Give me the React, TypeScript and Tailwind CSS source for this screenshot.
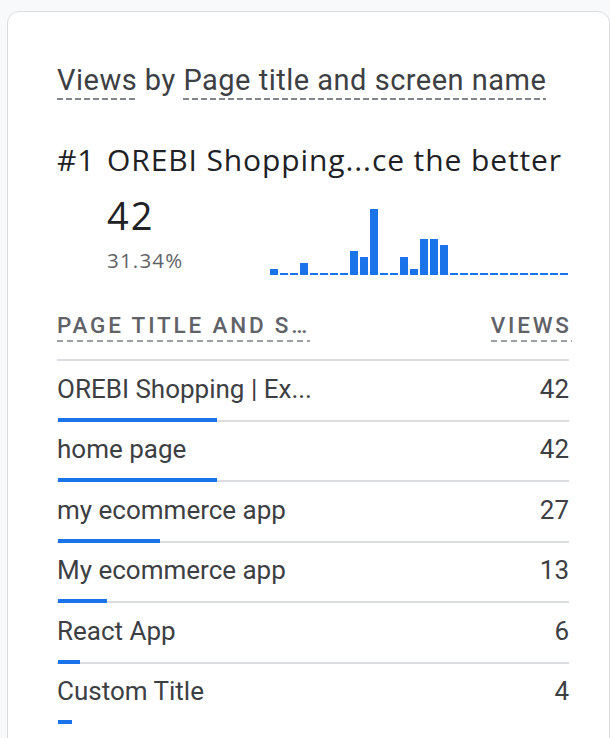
import React from 'react';

interface Row {
    title: string;
    views: number;
}

const rows: Row[] = [
    { title: 'OREBI Shopping | Ex...', views: 42 },
    { title: 'home page', views: 42 },
    { title: 'my ecommerce app', views: 27 },
    { title: 'My ecommerce app', views: 13 },
    { title: 'React App', views: 6 },
    { title: 'Custom Title', views: 4 },
];

const total = rows.reduce((sum, r) => sum + r.views, 0);

// daily views for the top page, 30 days
const trend = [1, 0, 0, 2, 0, 0, 0, 0, 4, 3, 11, 0, 0, 3, 1, 6, 6, 5, 0, 0, 0, 0, 0, 0, 0, 0, 0, 0, 0, 0];

const dashTitle =
    'bg-[linear-gradient(to_right,#80868b_6px,transparent_6px)] bg-[length:9px_2px] bg-repeat-x bg-[position:0_100%]';
const dashHeader =
    'bg-[linear-gradient(to_right,#9aa0a6_6px,transparent_6px)] bg-[length:10px_2px] bg-repeat-x bg-[position:0_100%]';

const Sparkline: React.FC = () => (
    <div className="flex items-end gap-[2px] h-[66px]">
        {trend.map((v, i) => (
            <div key={i} className="w-[8px] bg-[#1a73e8]" style={{ height: v === 0 ? 2 : v * 6 }} />
        ))}
    </div>
);

export default function App() {
    return (
        <div className="bg-[#f8f9fa] pt-[11px] pl-[7px] overflow-hidden h-[738px]">
            <div className="w-[603px] h-[760px] bg-white border border-[#dadce0] rounded-[12px] pl-[49px] pr-[40px] pt-[50px] font-['Roboto',sans-serif]">
                <div className="text-[29px] leading-[36px] tracking-[0.5px] text-[#3c4043] whitespace-nowrap">
                    <span className={`pb-[3px] ${dashTitle}`}>Views</span> by{' '}
                    <span className={`pb-[3px] ${dashTitle}`}>Page title and screen name</span>
                </div>

                <div className="mt-[44px] flex text-[30px] leading-[36px] tracking-[0.9px] text-[#202124] whitespace-nowrap font-['Open_Sans',sans-serif]">
                    <span className="w-[50px]">#1</span>
                    <span>OREBI Shopping...ce the better</span>
                </div>

                <div className="mt-[17px] flex h-[80px] font-['Open_Sans',sans-serif]">
                    <div className="ml-[50px] w-[163px]">
                        <div className="text-[38px] leading-[40px] tracking-[2px] text-[#202124]">42</div>
                        <div className="mt-[13px] text-[20.5px] leading-[24px] tracking-[1.2px] text-[#5f6368]">
                            {((rows[0].views / total) * 100).toFixed(2)}%
                        </div>
                    </div>
                    <div className="flex items-end">
                        <Sparkline />
                    </div>
                </div>

                <div className="mt-[36px] flex justify-between pb-[17px] border-b-2 border-[#dadce0] text-[22.5px] leading-[28px] font-medium tracking-[0.125em] text-[#5f6368]">
                    <span className={`pb-[3px] ${dashHeader}`}>PAGE TITLE AND S…</span>
                    <span className={`pb-[3px] -mr-[0.125em] ${dashHeader}`}>VIEWS</span>
                </div>

                {rows.map((row, i) => (
                    <div key={row.title} className="pt-[12.5px]">
                        <div className="flex justify-between text-[26px] leading-[30px] text-[#3c4043]">
                            <span>{row.title}</span>
                            <span>{row.views}</span>
                        </div>
                        <div className="mt-[14px] relative h-[4px]">
                            {i < rows.length - 1 && (
                                <div className="absolute left-0 right-0 bottom-0 h-[2px] bg-[#dadce0]" />
                            )}
                            <div
                                className="absolute left-[1px] top-0 h-[4px] bg-[#1a73e8]"
                                style={{ width: (row.views / total) * 511 - 1 }}
                            />
                        </div>
                    </div>
                ))}
            </div>
        </div>
    );
}
